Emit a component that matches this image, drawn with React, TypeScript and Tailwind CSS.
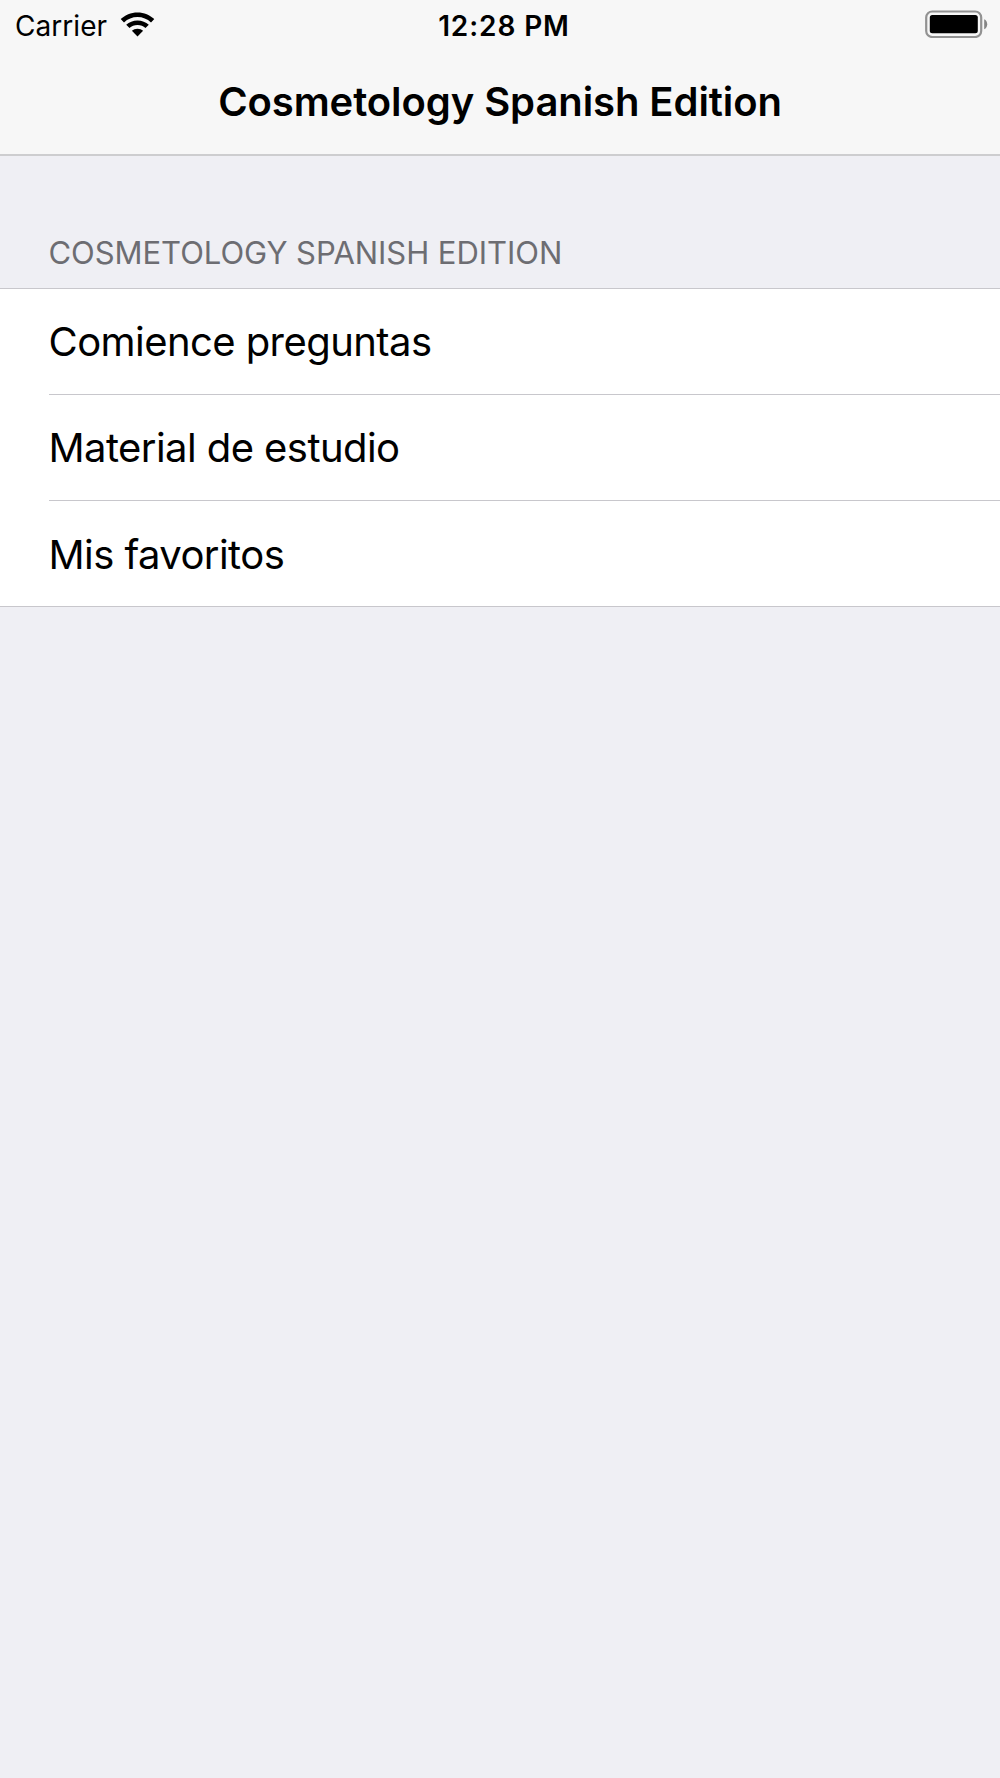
const items = ["Comience preguntas", "Material de estudio", "Mis favoritos"];

function WifiIcon() {
  return (
    <svg className="mb-0.5" width="35" height="25" viewBox="0 0 35 25" fill="black">
      <path d="M17.5 0.5C10.9 0.5 5 3.1 0.7 7.1L4 10.4C7.7 7 12.4 5.1 17.5 5.1S27.3 7 31 10.4L34.3 7.1C30 3.1 24.1 0.5 17.5 0.5Z" />
      <path d="M17.5 8.5C13.1 8.5 9.1 10.2 6.2 12.7L9.5 16C11.6 14.1 14.3 13.1 17.5 13.1S23.4 14.1 25.5 16L28.8 12.7C25.9 10.2 21.9 8.5 17.5 8.5Z" />
      <path d="M17.5 16.7C15.3 16.7 13.3 17.4 11.9 18.7L17.5 24.4L23.1 18.7C21.7 17.4 19.7 16.7 17.5 16.7Z" />
    </svg>
  );
}

function BatteryIcon() {
  return (
    <svg className="mb-0.5" width="63" height="28" viewBox="0 0 63 28" fill="none">
      <rect x="1.2" y="1.5" width="55" height="25.5" rx="6" stroke="#929292" strokeWidth="2.2" />
      <rect x="4.8" y="5" width="48" height="18.3" rx="2.5" fill="black" />
      <path d="M59.2 9.3C63.2 11 63.2 17.5 59.2 19.3Z" fill="#858585" />
    </svg>
  );
}

export default function App() {
  return (
    <div className="w-[1000px] h-[1778px] bg-[#efeff4] text-black font-[Inter,sans-serif]">
      <header className="h-[156px] bg-[#f7f7f7] border-b-2 border-[#cdcdcf]">
        <div className="grid grid-cols-3 h-[50px] pl-[15px] pr-3 items-center">
          <div className="flex items-center gap-[13px]">
            <span className="text-[28px] pt-px tracking-[0.05px]">Carrier</span>
            <WifiIcon />
          </div>
          <span className="text-[28px] font-semibold text-center tracking-[0.9px] pt-px pl-[5px]">
            12:28 PM
          </span>
          <div className="flex justify-end">
            <BatteryIcon />
          </div>
        </div>
        <h1 className="h-[103px] flex items-center justify-center text-[40px] font-semibold tracking-[-0.08px]">
          Cosmetology Spanish Edition
        </h1>
      </header>
      <main>
        <h2 className="h-[132px] pt-[76px] pl-[48.5px] text-[31px] leading-[42px] tracking-[-0.05px] text-[#6d6d72]">
          COSMETOLOGY SPANISH EDITION
        </h2>
        <ul className="bg-white border-y border-[#c8c7cc] pl-[49px] divide-y divide-[#c8c7cc]">
          {items.map((item) => (
            <li
              key={item}
              className="h-[106px] last:h-[105px] pt-px last:pt-0.5 flex items-center text-[40px] tracking-[-0.57px] -indent-[0.5px]"
            >
              {item}
            </li>
          ))}
        </ul>
      </main>
    </div>
  );
}
